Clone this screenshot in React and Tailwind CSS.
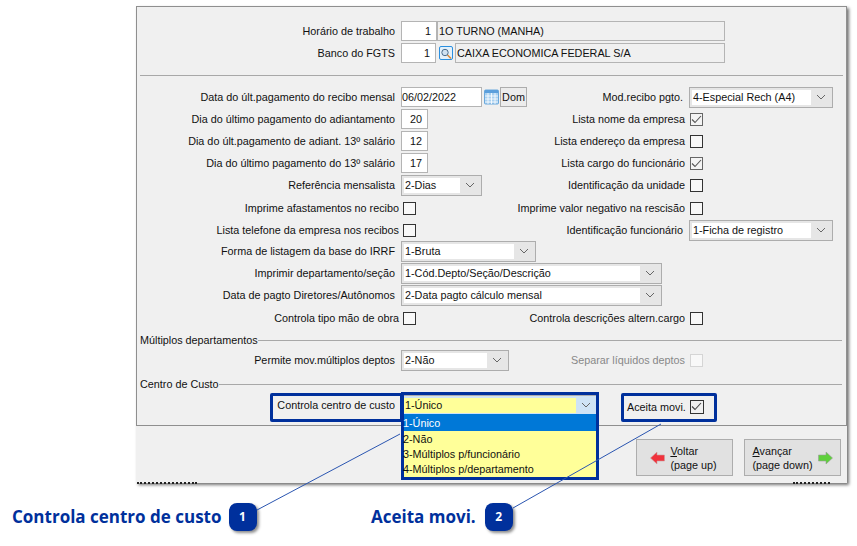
const ui = { fontFamily: '"Liberation Sans", sans-serif' };

function Label({ children, wide, muted }) {
  return (
    <span className={`${wide ? "w-[262px]" : "w-[258px]"} shrink-0 pt-px text-right whitespace-nowrap ${muted ? "text-[#888]" : ""}`}>
      {children}
    </span>
  );
}

function Checkbox({ checked, disabled }) {
  return (
    <span
      className={`flex h-[13px] w-[13px] shrink-0 items-center justify-center border ${
        disabled ? "border-[#d5d5d5] bg-[#f8f8f8]" : checked ? "border-[#666] bg-[#f4f4f4]" : "border-[#333] bg-[#f8f8f8]"
      }`}
    >
      {checked && (
        <svg width="11" height="11" viewBox="0 0 11 11" fill="none" stroke="#555" strokeWidth="1.1">
          <path d="M1 5.5 L4 8.5 L10 2" />
        </svg>
      )}
    </span>
  );
}

function Chevron() {
  return (
    <svg width="10" height="6" viewBox="0 0 10 6" fill="none" stroke="#666" strokeWidth="1">
      <path d="M1 1 L5 5 L9 1" />
    </svg>
  );
}

function Select({ value, width }) {
  return (
    <div className={`flex h-[21px] shrink-0 items-center border border-[#adadad] bg-[#e6e6e6] p-[2px] ${width}`}>
      <div className="flex h-full min-w-0 flex-1 items-center bg-white pl-px pt-px whitespace-nowrap">{value}</div>
      <div className="flex w-[19px] justify-center">
        <Chevron />
      </div>
    </div>
  );
}

function NumField({ value, width = "w-[27px]" }) {
  return (
    <div className={`flex h-[20px] shrink-0 items-center justify-end border border-[#b4b4b4] bg-white pr-[5px] ${width}`}>
      {value}
    </div>
  );
}

function Desc({ value, width }) {
  return (
    <div className={`flex h-[20px] items-center border border-[#b4b4b4] bg-[#f0f0f0] pl-px whitespace-nowrap ${width}`}>
      {value}
    </div>
  );
}

function Row({ className = "", children }) {
  return <div className={`flex h-[22px] shrink-0 items-center ${className}`}>{children}</div>;
}

function RightCell({ label, children, check, muted }) {
  return (
    <div className="ml-auto mr-[13px] flex items-center">
      <span className={`${check ? "mr-[4px]" : "mr-[6px]"} pt-px whitespace-nowrap ${muted ? "text-[#888]" : ""}`}>{label}</span>
      <div className={`flex w-[144px] ${check ? "pl-px" : ""}`}>{children}</div>
    </div>
  );
}

function GroupTitle({ title, className = "" }) {
  return (
    <div className={`flex h-[18px] items-center pl-[3px] pr-[4px] ${className}`}>
      <span className="pt-px whitespace-nowrap">{title}</span>
      <div className="h-px flex-1 bg-[#a8a8a8]" />
    </div>
  );
}

function SearchIcon() {
  return (
    <svg width="14" height="15" viewBox="0 0 14 15" className="shrink-0">
      <rect x="0.5" y="0.5" width="13" height="13" rx="1.5" fill="#e4f1fb" stroke="#2a8fe0" />
      <circle cx="6" cy="6.5" r="3.2" fill="#cfe2f2" stroke="#4c6c8c" />
      <path d="M8.5 9 L12 12.5" stroke="#d98a3c" strokeWidth="1.6" />
    </svg>
  );
}

function CalendarIcon() {
  return (
    <svg width="15" height="16" viewBox="0 0 15 16" className="shrink-0">
      <rect x="0.5" y="1" width="14" height="14" rx="1" fill="#a8d0f0" stroke="#6aa8dc" />
      <rect x="1" y="1" width="13" height="3" fill="#5b9fdc" />
      <path d="M1 7 H14 M1 10 H14 M1 13 H14 M4 4 V15 M7.5 4 V15 M11 4 V15" stroke="#fff" strokeWidth="0.8" />
    </svg>
  );
}

function ArrowLeft() {
  return (
    <svg width="15" height="14" viewBox="0 0 15 14" className="shrink-0">
      <path d="M0.5 7 L7 1 V4 H14.5 V10 H7 V13 Z" fill="#f0323c" stroke="#c9a0a0" strokeWidth="0.6" />
    </svg>
  );
}

function ArrowRight() {
  return (
    <svg width="15" height="14" viewBox="0 0 15 14" className="shrink-0">
      <path d="M14.5 7 L8 1 V4 H0.5 V10 H8 V13 Z" fill="#5fd03c" stroke="#9a9a9a" strokeWidth="0.6" />
    </svg>
  );
}

function Badge({ n }) {
  return (
    <span className="flex h-[28px] w-[28px] shrink-0 items-center justify-center rounded-[8px] bg-[#00309c] text-[12px] font-bold text-white shadow-[2px_2px_3px_rgba(0,0,0,0.45)]">
      {n}
    </span>
  );
}

export default function App() {
  return (
    <div className="relative h-[546px] w-[857px] overflow-hidden bg-white text-[10.8px] text-[#111]" style={ui}>
      <div className="relative pl-[136px] pt-[6px]">
        <div className="relative h-[477px] w-[711px] bg-[#f0f0f0] shadow-[2px_2px_3px_rgba(0,0,0,0.55)]">
          {/* painel principal */}
          <div className="flex h-[420px] flex-col border border-[#8f8f8f] pt-[13px]">
            <Row>
              <Label>Horário de trabalho</Label>
              <div className="ml-[6px] flex">
                <NumField value="1" width="w-[36px]" />
                <Desc value="1O TURNO (MANHA)" width="w-[288px]" />
              </div>
            </Row>
            <Row>
              <Label>Banco do FGTS</Label>
              <div className="ml-[6px] flex items-center">
                <NumField value="1" width="w-[35px]" />
                <span className="ml-[3px] mr-[2px] flex">
                  <SearchIcon />
                </span>
                <Desc value="CAIXA ECONOMICA FEDERAL S/A" width="w-[270px]" />
              </div>
            </Row>
            <div className="mx-[3px] mb-[10px] mt-[11px] h-px bg-[#a8a8a8]" />
            <Row>
              <Label>Data do últ.pagamento do recibo mensal</Label>
              <div className="ml-[6px] flex items-center">
                <div className="flex h-[20px] w-[81px] items-center border border-[#b4b4b4] bg-white">06/02/2022</div>
                <span className="ml-[2px] mr-[1px] flex">
                  <CalendarIcon />
                </span>
                <div className="flex h-[20px] w-[27px] items-center justify-center border border-[#adadad] bg-[#ececec]">Dom</div>
              </div>
              <RightCell label="Mod.recibo pgto.">
                <Select value="4-Especial Rech (A4)" width="w-[144px]" />
              </RightCell>
            </Row>
            <Row>
              <Label>Dia do último pagamento do adiantamento</Label>
              <div className="ml-[6px]">
                <NumField value="20" />
              </div>
              <RightCell label="Lista nome da empresa" check>
                <Checkbox checked />
              </RightCell>
            </Row>
            <Row>
              <Label>Dia do últ.pagamento de adiant. 13º salário</Label>
              <div className="ml-[6px]">
                <NumField value="12" />
              </div>
              <RightCell label="Lista endereço da empresa" check>
                <Checkbox />
              </RightCell>
            </Row>
            <Row>
              <Label>Dia do último pagamento do 13º salário</Label>
              <div className="ml-[6px]">
                <NumField value="17" />
              </div>
              <RightCell label="Lista cargo do funcionário" check>
                <Checkbox checked />
              </RightCell>
            </Row>
            <Row>
              <Label>Referência mensalista</Label>
              <div className="ml-[6px]">
                <Select value="2-Dias" width="w-[81px]" />
              </div>
              <RightCell label="Identificação da unidade" check>
                <Checkbox />
              </RightCell>
            </Row>
            <Row className="mt-px">
              <Label wide>Imprime afastamentos no recibo</Label>
              <div className="ml-[4px]">
                <Checkbox />
              </div>
              <RightCell label="Imprime valor negativo na rescisão" check>
                <Checkbox />
              </RightCell>
            </Row>
            <Row>
              <Label wide>Lista telefone da empresa nos recibos</Label>
              <div className="ml-[4px]">
                <Checkbox />
              </div>
              <RightCell label="Identificação funcionário">
                <Select value="1-Ficha de registro" width="w-[144px]" />
              </RightCell>
            </Row>
            <Row className="-mt-px">
              <Label>Forma de listagem da base do IRRF</Label>
              <div className="ml-[6px]">
                <Select value="1-Bruta" width="w-[135px]" />
              </div>
            </Row>
            <Row>
              <Label>Imprimir departamento/seção</Label>
              <div className="ml-[6px]">
                <Select value="1-Cód.Depto/Seção/Descrição" width="w-[261px]" />
              </div>
            </Row>
            <Row>
              <Label>Data de pagto Diretores/Autônomos</Label>
              <div className="ml-[6px]">
                <Select value="2-Data pagto cálculo mensal" width="w-[261px]" />
              </div>
            </Row>
            <Row className="mt-px">
              <Label wide>Controla tipo mão de obra</Label>
              <div className="ml-[4px]">
                <Checkbox />
              </div>
              <RightCell label="Controla descrições altern.cargo" check>
                <Checkbox />
              </RightCell>
            </Row>
            <GroupTitle title="Múltiplos departamentos" className="mt-[2px]" />
            <Row>
              <Label>Permite mov.múltiplos deptos</Label>
              <div className="ml-[6px]">
                <Select value="2-Não" width="w-[108px]" />
              </div>
              <RightCell label="Separar líquidos deptos" check muted>
                <Checkbox disabled />
              </RightCell>
            </Row>
            <GroupTitle title="Centro de Custo" className="mt-[4px]" />
            <Row className="mt-px">
              <Label>Controla centro de custo</Label>
              <div className="ml-[6px] flex h-[21px] w-[197px] items-center border border-[#adadad] bg-[#cfe3f5] p-[2px]">
                <div className="flex h-full flex-1 items-center bg-[#ffff99] pl-px pt-px">1-Único</div>
                <div className="flex w-[19px] justify-center">
                  <Chevron />
                </div>
              </div>
            </Row>
          </div>

          {/* botões */}
          <div className="flex justify-end gap-[11px] pr-[6px] pt-[13px]">
            <div className="flex h-[37px] w-[97px] items-center justify-center gap-[5px] border border-[#adadad] bg-[#e1e1e1] pr-[2px] leading-[14px]">
              <ArrowLeft />
              <span>
                <u>V</u>oltar
                <br />
                (page up)
              </span>
            </div>
            <div className="flex h-[37px] w-[97px] items-center justify-center gap-[5px] border border-[#adadad] bg-[#e1e1e1] leading-[14px]">
              <span>
                <u>A</u>vançar
                <br />
                (page down)
              </span>
              <ArrowRight />
            </div>
          </div>
        </div>
      </div>

      {/* resto da tela cortado, aparece por baixo da janela */}
      <div className="absolute left-[137px] top-[482px] h-[2px] w-[60px] border-t-2 border-dotted border-[#222]" />
      <div className="absolute left-[793px] top-[482px] h-[2px] w-[37px] border-t-2 border-dotted border-[#222]" />

      {/* títulos das chamadas */}
      <div className="flex pl-[12px] pt-[20px] text-[17px] font-bold leading-[28px] text-[#00309c]" style={{ fontFamily: '"Open Sans", sans-serif' }}>
        <div className="flex w-[359px] items-center gap-[7px]">
          <span className="whitespace-nowrap">Controla centro de custo</span>
          <Badge n="1" />
        </div>
        <div className="flex items-center gap-[9px]">
          <span className="whitespace-nowrap">Aceita movi.</span>
          <Badge n="2" />
        </div>
      </div>

      {/* lista aberta sobre o formulário */}
      <div className="absolute left-[401px] top-[414px] w-[198px] border-x-[3px] border-b-[3px] border-[#00309c] bg-[#ffff99] leading-[15px]">
        <div className="flex h-[17px] items-center bg-[#0078d7] pt-[2px] text-white">
          <span className="-ml-px">1-Único</span>
        </div>
        <div className="-ml-px pt-px">2-Não</div>
        <div className="-ml-px -mt-px pt-px">3-Múltiplos p/funcionário</div>
        <div className="-ml-px -mt-px pt-px">4-Múltiplos p/departamento</div>
      </div>

      {/* destaques */}
      <div className="absolute left-[401px] top-[392px] h-[24px] w-[198px] border-[3px] border-b-0 border-[#00309c]" />
      <div className="absolute left-[270px] top-[393px] h-[29px] w-[133px] rounded-[2px] border-[3px] border-[#00309c]" />
      <div className="absolute left-[621px] top-[393px] flex h-[29px] w-[96px] items-center rounded-[2px] border-[3px] border-[#00309c] pl-[3px]">
        <span className="mr-[4px] whitespace-nowrap">Aceita movi.</span>
        <span className="-mt-[2px] flex h-[14px] w-[14px] items-center justify-center border border-[#333]">
          <svg width="11" height="11" viewBox="0 0 11 11" fill="none" stroke="#444" strokeWidth="1.1">
            <path d="M1 5.5 L4 8.5 L10 2" />
          </svg>
        </span>
      </div>

      <svg className="pointer-events-none absolute left-0 top-0" width="857" height="546">
        <path d="M400 434 L257 510" stroke="#2a55b0" strokeWidth="1" fill="none" />
        <path d="M661 424 L513 508" stroke="#2a55b0" strokeWidth="1" fill="none" />
      </svg>
    </div>
  );
}
